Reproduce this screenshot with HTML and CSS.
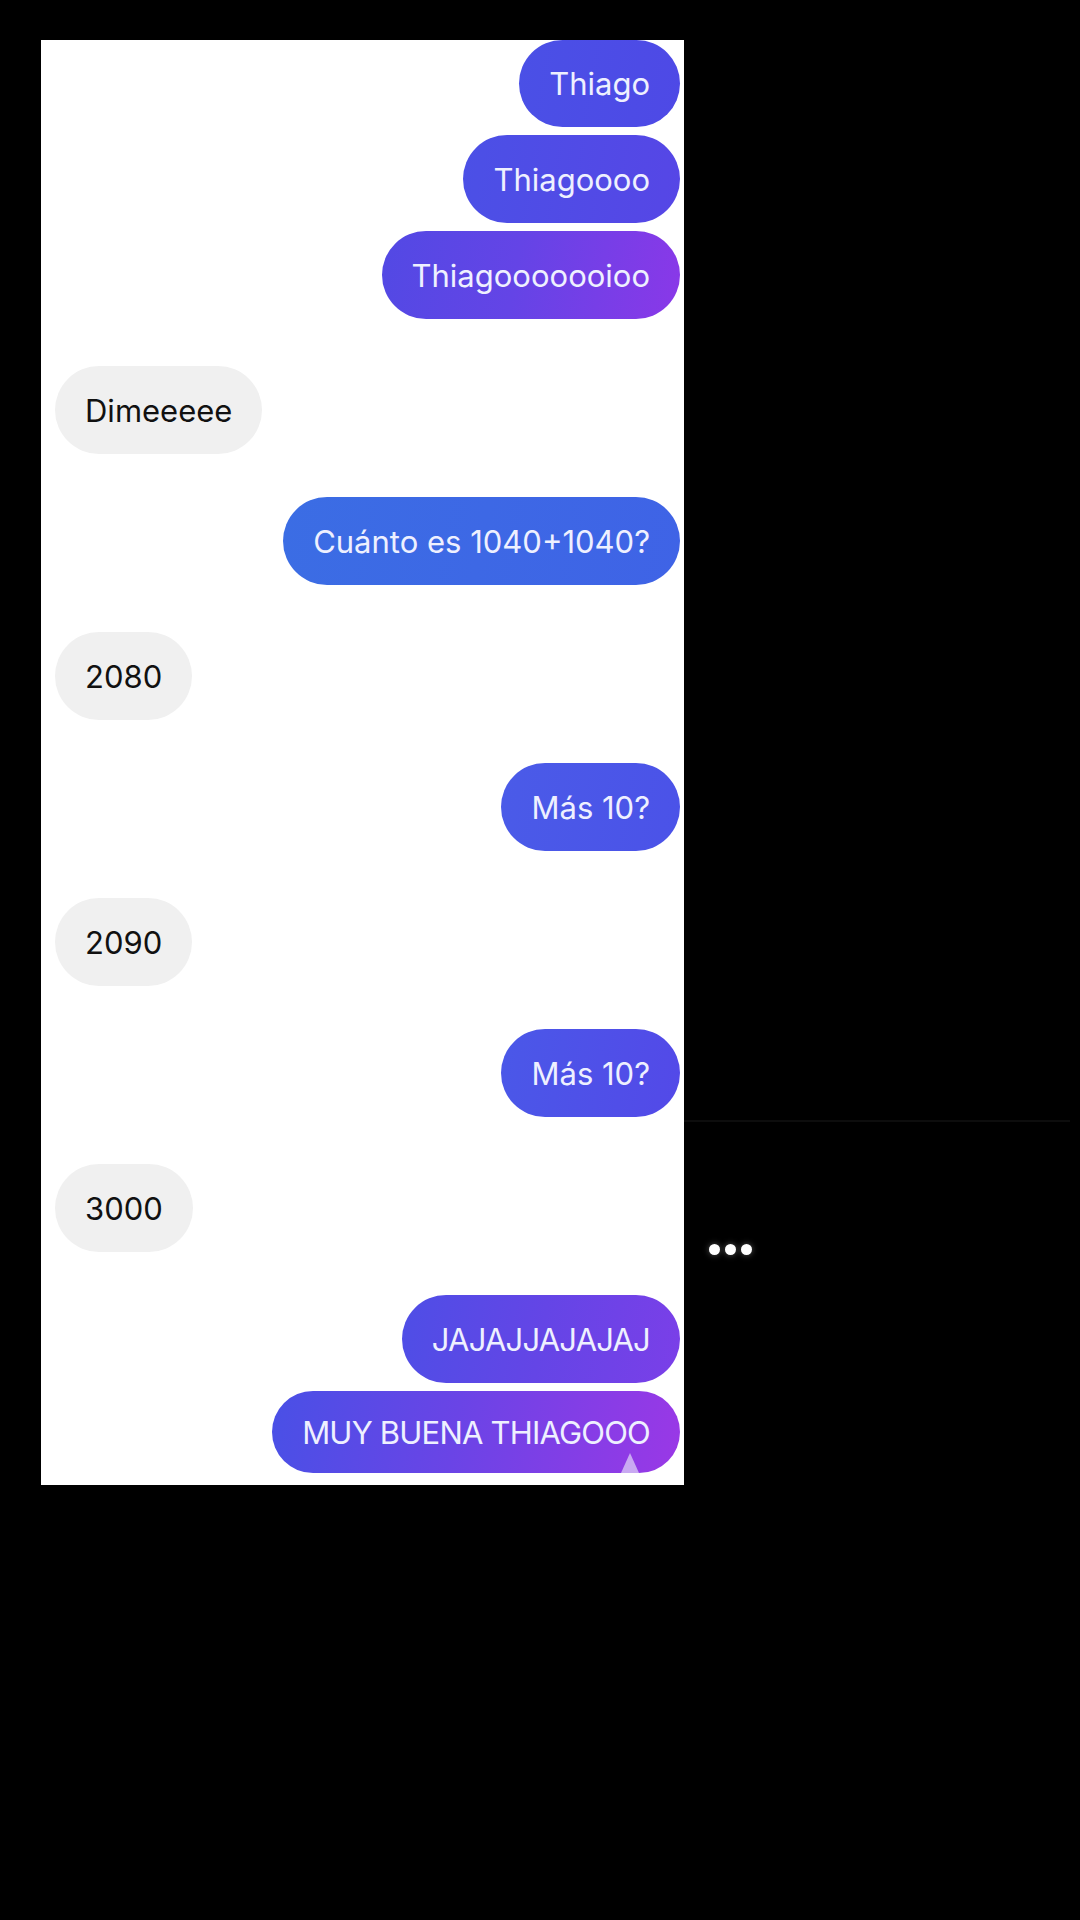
FILE: index.html
```html
<!DOCTYPE html>
<html lang="es">
<head>
  <meta charset="UTF-8">
  <meta name="viewport" content="width=device-width, initial-scale=1.0">
  <title>Chat Thiago</title>
  <link rel="stylesheet" href="styles.css">
</head>
<body>

  <!-- Chat panel -->
  <section class="chat">
    <div class="row me first"><div class="bubble b-thiago">Thiago</div></div>
    <div class="row me"><div class="bubble b-thiago2">Thiagoooo</div></div>
    <div class="row me"><div class="bubble b-thiago3">Thiagooooooioo</div></div>

    <div class="row them"><div class="bubble gray">Dimeeeee</div></div>

    <div class="row me new"><div class="bubble b-cuanto">Cuánto es 1040+1040?</div></div>

    <div class="row them"><div class="bubble gray">2080</div></div>

    <div class="row me new"><div class="bubble b-mas1">Más 10?</div></div>

    <div class="row them"><div class="bubble gray">2090</div></div>

    <div class="row me new"><div class="bubble b-mas2">Más 10?</div></div>

    <div class="row them"><div class="bubble gray">3000</div></div>

    <div class="row me new"><div class="bubble caps b-jaja">JAJAJJAJAJAJ</div></div>
    <div class="row me"><div class="bubble caps b-muy">MUY BUENA THIAGOOO<span class="tail"></span></div></div>
  </section>

  <!-- Dark side with typing dots -->
  <aside class="side">
    <div class="side-line"></div>
    <div class="typing">
      <span></span><span></span><span></span>
    </div>
  </aside>

</body>
</html>
```

FILE: styles.css
```css
/* General body styling */
body {
  margin: 0;
  background-color: #000;
  display: flex;
  align-items: flex-start;
  height: 1920px;
  overflow: hidden;
  font-family: 'Inter', 'Noto Sans', sans-serif;
}

/* White chat panel */
.chat {
  margin-top: 40px;
  margin-left: 41px;
  width: 643px;
  height: 1445px;
  box-sizing: border-box;
  padding: 0 4px 0 14px;
  background-color: #fff;
  display: flex;
  flex-direction: column;
  overflow: hidden;
}

.row {
  display: flex;
  margin-top: 8px;
}

.row.first {
  margin-top: 0;
}

.row.me {
  justify-content: flex-end;
}

.row.me.new {
  margin-top: 43px;
}

.row.them {
  justify-content: flex-start;
  margin-top: 47px;
}

/* Bubbles */
.bubble {
  position: relative;
  height: 88px;
  padding: 0 30px;
  border-radius: 44px;
  display: flex;
  align-items: center;
  font-size: 31px;
  color: #eef0ff;
  white-space: nowrap;
}

.bubble.caps {
  letter-spacing: -0.8px;
}

.b-thiago {
  height: 87px;
  background: linear-gradient(100deg, #4a50e6, #4e49e6);
}

.b-thiago2 {
  background: linear-gradient(100deg, #4b50e6, #5646e6);
}

.b-thiago3 {
  background: linear-gradient(100deg, #5249e4 0%, #6444e6 45%, #8a38e8 100%);
}

.b-cuanto {
  background: linear-gradient(100deg, #3b6de4, #3f63e6);
}

.b-mas1 {
  background: linear-gradient(100deg, #4a5be8, #4b52e8);
}

.b-mas2 {
  background: linear-gradient(100deg, #4a58e8, #5349e8);
}

.b-jaja {
  background: linear-gradient(100deg, #4e4ee6, #6445e6 50%, #7b3fe8);
}

.b-muy {
  height: 82px;
  background: linear-gradient(100deg, #4950e6, #6a44e6 45%, #9a38e6);
}

.gray {
  background-color: #f0f0f0;
  color: #111;
}

/* Little reaction marker at the bottom of the last bubble */
.tail {
  position: absolute;
  right: 41px;
  bottom: 0;
  width: 0;
  height: 0;
  border-left: 9px solid transparent;
  border-right: 9px solid transparent;
  border-bottom: 20px solid #c9a9f2;
}

/* Dark side */
.side {
  flex: 1;
  display: flex;
  flex-direction: column;
  padding-top: 1120px;
}

.side-line {
  height: 2px;
  margin-right: 10px;
  background-color: #0d0d0d;
}

.typing {
  display: flex;
  gap: 5px;
  margin-top: 122px;
  margin-left: 25px;
}

.typing span {
  width: 11px;
  height: 11px;
  border-radius: 50%;
  background-color: #fff;
  box-shadow: 0 0 6px rgba(255, 255, 255, 0.35);
}
```
